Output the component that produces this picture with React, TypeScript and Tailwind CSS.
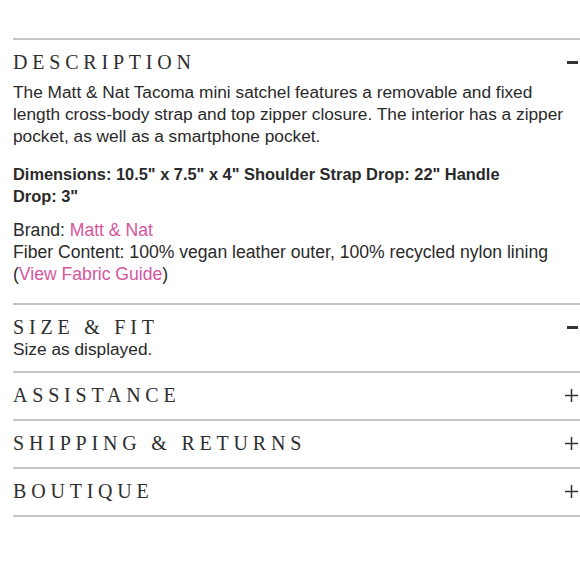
import React from 'react';

type Section = {
  title: string;
  open: boolean;
};

const headingClass =
  "font-['Liberation_Serif',serif] text-[20px] leading-[20px] tracking-[4.8px] text-[#2e2e2e]";

const Minus = () => <span className="block w-[11px] h-[3px] bg-[#333]" />;

const Plus = () => (
  <svg width="13" height="13" viewBox="0 0 13 13" className="block">
    <path d="M6.5 0v13M0 6.5h13" stroke="#333" strokeWidth="1.5" />
  </svg>
);

const Header = ({ title, open, className }: { title: string; open: boolean; className: string }) => (
  <div className={`flex items-center justify-between pr-[2px] ${className}`}>
    <span className={headingClass}>{title}</span>
    {open ? <Minus /> : <Plus />}
  </div>
);

const collapsed: Section[] = [
  { title: 'ASSISTANCE', open: false },
  { title: 'SHIPPING & RETURNS', open: false },
  { title: 'BOUTIQUE', open: false },
];

export default function App() {
  return (
    <div className="w-[580px] h-[580px] bg-white pl-[13px] pt-[38px] font-['Liberation_Sans',Arial,sans-serif] text-[17.3px] leading-[22px] text-[#2a2a2a]">
      <div className="border-t-2 border-[#c4c4c4]">
        <Header title="DESCRIPTION" open className="pt-[12px] pb-[9px]" />
        <p className="whitespace-nowrap">
          The Matt &amp; Nat Tacoma mini satchel features a removable and fixed
          <br />
          length cross-body strap and top zipper closure. The interior has a zipper
          <br />
          pocket, as well as a smartphone pocket.
        </p>
        <p className="mt-[16px] font-bold text-[16.4px] whitespace-nowrap">
          Dimensions: 10.5" x 7.5" x 4" Shoulder Strap Drop: 22" Handle
          <br />
          Drop: 3"
        </p>
        <div className="mt-[12px] pb-[18px] text-[17.6px]">
          <div>
            Brand: <a className="text-[#d6569e]">Matt &amp; Nat</a>
          </div>
          <div>Fiber Content: 100% vegan leather outer, 100% recycled nylon lining</div>
          <div>
            (<a className="text-[#d6569e]">View Fabric Guide</a>)
          </div>
        </div>
      </div>

      <div className="border-t-2 border-[#c4c4c4]">
        <Header title="SIZE & FIT" open className="pt-[12px] pb-[1px]" />
        <p className="pb-[11px]">Size as displayed.</p>
      </div>

      {collapsed.map((s) => (
        <div key={s.title} className="border-t-2 border-[#c4c4c4]">
          <Header title={s.title} open={s.open} className="pt-[12px] pb-[14px]" />
        </div>
      ))}
      <div className="border-t-2 border-[#c4c4c4]" />
    </div>
  );
}
